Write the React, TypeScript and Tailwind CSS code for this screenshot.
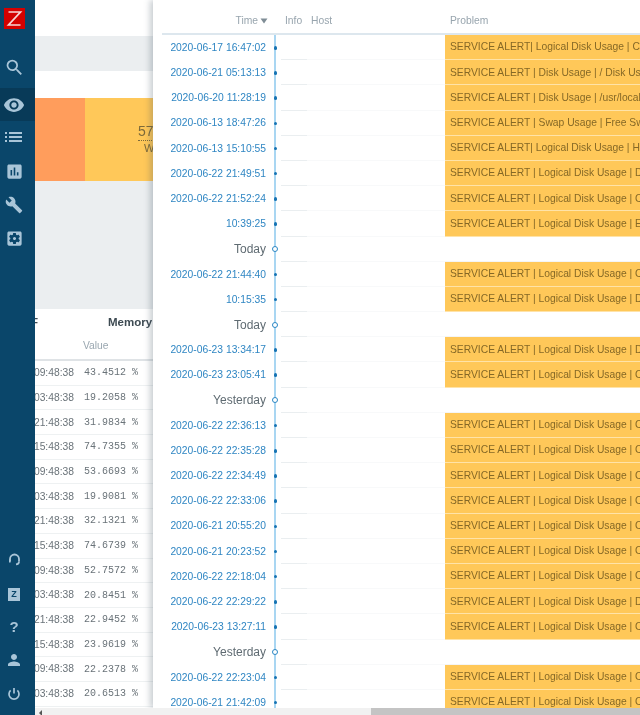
const events: Array<{ time?: string; day?: string; problem?: string }> = [
  { time: '2020-06-17 16:47:02', problem: 'SERVICE ALERT| Logical Disk Usage | C: Disk Usage' },
  { time: '2020-06-21 05:13:13', problem: 'SERVICE ALERT | Disk Usage | / Disk Usage' },
  { time: '2020-06-20 11:28:19', problem: 'SERVICE ALERT | Disk Usage | /usr/local' },
  { time: '2020-06-13 18:47:26', problem: 'SERVICE ALERT | Swap Usage | Free Swap' },
  { time: '2020-06-13 15:10:55', problem: 'SERVICE ALERT| Logical Disk Usage | H: Disk' },
  { time: '2020-06-22 21:49:51', problem: 'SERVICE ALERT | Logical Disk Usage | D: Disk' },
  { time: '2020-06-22 21:52:24', problem: 'SERVICE ALERT | Logical Disk Usage | C: Disk' },
  { time: '10:39:25', problem: 'SERVICE ALERT | Logical Disk Usage | E: Disk' },
  { day: 'Today' },
  { time: '2020-06-22 21:44:40', problem: 'SERVICE ALERT | Logical Disk Usage | C: Disk' },
  { time: '10:15:35', problem: 'SERVICE ALERT | Logical Disk Usage | D: Disk' },
  { day: 'Today' },
  { time: '2020-06-23 13:34:17', problem: 'SERVICE ALERT | Logical Disk Usage | D: Disk' },
  { time: '2020-06-23 23:05:41', problem: 'SERVICE ALERT | Logical Disk Usage | C: Disk' },
  { day: 'Yesterday' },
  { time: '2020-06-22 22:36:13', problem: 'SERVICE ALERT | Logical Disk Usage | C: Disk' },
  { time: '2020-06-22 22:35:28', problem: 'SERVICE ALERT | Logical Disk Usage | C: Disk' },
  { time: '2020-06-22 22:34:49', problem: 'SERVICE ALERT | Logical Disk Usage | C: Disk' },
  { time: '2020-06-22 22:33:06', problem: 'SERVICE ALERT | Logical Disk Usage | C: Disk' },
  { time: '2020-06-21 20:55:20', problem: 'SERVICE ALERT | Logical Disk Usage | C: Disk' },
  { time: '2020-06-21 20:23:52', problem: 'SERVICE ALERT | Logical Disk Usage | C: Disk' },
  { time: '2020-06-22 22:18:04', problem: 'SERVICE ALERT | Logical Disk Usage | C: Disk' },
  { time: '2020-06-22 22:29:22', problem: 'SERVICE ALERT | Logical Disk Usage | D: Disk' },
  { time: '2020-06-23 13:27:11', problem: 'SERVICE ALERT | Logical Disk Usage | C: Disk' },
  { day: 'Yesterday' },
  { time: '2020-06-22 22:23:04', problem: 'SERVICE ALERT | Logical Disk Usage | C: Disk' },
  { time: '2020-06-21 21:42:09', problem: 'SERVICE ALERT | Logical Disk Usage | C: Disk' },
]

const memory = [
  ['09:48:38', '43.4512 %'],
  ['03:48:38', '19.2058 %'],
  ['21:48:38', '31.9834 %'],
  ['15:48:38', '74.7355 %'],
  ['09:48:38', '53.6693 %'],
  ['03:48:38', '19.9081 %'],
  ['21:48:38', '32.1321 %'],
  ['15:48:38', '74.6739 %'],
  ['09:48:38', '52.7572 %'],
  ['03:48:38', '20.8451 %'],
  ['21:48:38', '22.9452 %'],
  ['15:48:38', '23.9619 %'],
  ['09:48:38', '22.2378 %'],
  ['03:48:38', '20.6513 %'],
]

const Icon = ({ d, size = 20 }: { d: string; size?: number }) => (
  <svg width={size} height={size} viewBox="0 0 24 24" fill="currentColor">
    <path d={d} />
  </svg>
)

const Sidebar = () => (
  <div className="z-20 flex h-full w-[35px] shrink-0 flex-col bg-[#0a466a] text-[#a9c5d8]">
    <div className="ml-[4px] mt-[8px] flex h-[21px] w-[21px] items-center justify-center bg-[#d40000]">
      <svg width="17" height="17" viewBox="0 0 17 17" fill="none" stroke="#f6d6d6" strokeWidth="1.7">
        <path d="M2.5 2h12L2.5 15h12" />
      </svg>
    </div>
    <div className="mt-[27px] flex h-[22px] w-[28px] items-center justify-center">
      <Icon size={21} d="M15.5 14h-.79l-.28-.27A6.471 6.471 0 0 0 16 9.5 6.5 6.5 0 1 0 9.5 16c1.61 0 3.09-.59 4.23-1.57l.27.28v.79l5 4.99L20.49 19l-4.99-5zm-6 0C7.01 14 5 11.99 5 9.5S7.01 5 9.5 5 14 7.01 14 9.5 11.99 14 9.5 14z" />
    </div>
    <div className="mt-[10px] flex h-[33px] w-full items-center bg-[#083a58]">
      <div className="flex w-[28px] justify-center">
        <Icon size={22} d="M12 4.5C7 4.5 2.73 7.61 1 12c1.73 4.39 6 7.5 11 7.5s9.27-3.11 11-7.5c-1.73-4.39-6-7.5-11-7.5zM12 17c-2.76 0-5-2.24-5-5s2.24-5 5-5 5 2.24 5 5-2.24 5-5 5zm0-8c-1.66 0-3 1.34-3 3s1.34 3 3 3 3-1.34 3-3-1.34-3-3-3z" />
      </div>
    </div>
    <div className="mt-[5px] flex h-[22px] w-[28px] items-center justify-center">
      <svg width="18" height="12" viewBox="0 0 18 12" fill="currentColor">
        <rect x="0" y="1" width="2" height="2" />
        <rect x="0" y="5" width="2" height="2" />
        <rect x="0" y="9" width="2" height="2" />
        <rect x="4" y="1" width="13" height="2" />
        <rect x="4" y="5" width="13" height="2" />
        <rect x="4" y="9" width="13" height="2" />
      </svg>
    </div>
    <div className="mt-[12px] flex h-[22px] w-[28px] items-center justify-center">
      <Icon size={19} d="M19 3H5c-1.1 0-2 .9-2 2v14c0 1.1.9 2 2 2h14c1.1 0 2-.9 2-2V5c0-1.1-.9-2-2-2zM9 17H7v-7h2v7zm4 0h-2V7h2v10zm4 0h-2v-4h2v4z" />
    </div>
    <div className="mt-[12px] flex h-[22px] w-[28px] items-center justify-center">
      <Icon size={18} d="M22.7 19l-9.1-9.1c.9-2.3.4-5-1.5-6.9-2-2-5-2.4-7.4-1.3L9 6 6 9 1.6 4.7C.4 7.1.9 10.1 2.9 12.1c1.9 1.9 4.6 2.4 6.9 1.5l9.1 9.1c.4.4 1 .4 1.4 0l2.3-2.3c.5-.4.5-1.1.1-1.4z" />
    </div>
    <div className="mt-[11px] flex h-[22px] w-[28px] items-center justify-center">
      <Icon size={19} d="M12 10c-1.1 0-2 .9-2 2s.9 2 2 2 2-.9 2-2-.9-2-2-2zm7-7H5c-1.11 0-2 .9-2 2v14c0 1.1.89 2 2 2h14c1.11 0 2-.9 2-2V5c0-1.1-.89-2-2-2zm-1.75 9c0 .23-.02.46-.05.68l1.48 1.16c.13.11.17.3.08.45l-1.4 2.42c-.09.15-.27.21-.43.15l-1.74-.7c-.36.28-.76.51-1.18.69l-.26 1.85c-.03.17-.18.3-.35.3h-2.8c-.17 0-.32-.13-.35-.29l-.26-1.85c-.43-.18-.82-.41-1.18-.69l-1.74.7c-.16.06-.34 0-.43-.15l-1.4-2.42c-.09-.15-.05-.34.08-.45l1.48-1.16c-.03-.23-.05-.46-.05-.69 0-.23.02-.46.05-.68l-1.48-1.16c-.13-.11-.17-.3-.08-.45l1.4-2.42c.09-.15.27-.21.43-.15l1.74.7c.36-.28.76-.51 1.18-.69l.26-1.85c.03-.17.18-.3.35-.3h2.8c.17 0 .32.13.35.29l.26 1.85c.43.18.82.41 1.18.69l1.74-.7c.16-.06.34 0 .43.15l1.4 2.42c.09.15.05.34-.08.45l-1.48 1.16c.03.23.05.46.05.69z" />
    </div>

    <div className="mt-auto flex h-[22px] w-[28px] items-center justify-center">
      <svg width="13" height="13" viewBox="0 0 13 13" fill="none" stroke="currentColor" strokeWidth="1.8">
        <path d="M2 8.5V6a4.5 4.5 0 0 1 9 0v2.5" />
        <path d="M11 8.5c0 1.5-1 2.7-3 2.9" />
        <rect x="1" y="6.5" width="1.6" height="3" fill="currentColor" stroke="none" />
      </svg>
    </div>
    <div className="mt-[13px] flex h-[22px] w-[28px] items-center justify-center">
      <div className="flex h-[13px] w-[12px] items-center justify-center bg-[#a9c5d8] text-[9px] font-bold leading-none text-[#0a466a]">Z</div>
    </div>
    <div className="mt-[10px] flex h-[22px] w-[28px] items-center justify-center text-[15px] font-bold leading-none">?</div>
    <div className="mt-[12px] flex h-[22px] w-[28px] items-center justify-center">
      <Icon size={18} d="M12 12c2.21 0 4-1.79 4-4s-1.79-4-4-4-4 1.79-4 4 1.79 4 4 4zm0 2c-2.67 0-8 1.34-8 4v2h16v-2c0-2.66-5.33-4-8-4z" />
    </div>
    <div className="mb-[10px] mt-[12px] flex h-[22px] w-[28px] items-center justify-center">
      <svg width="14" height="14" viewBox="0 0 14 14" fill="none" stroke="currentColor" strokeWidth="1.7">
        <path d="M7 1v5.5" />
        <path d="M3.6 3.4a5 5 0 1 0 6.8 0" />
      </svg>
    </div>
  </div>
)

const Dashboard = () => (
  <div className="flex min-h-0 flex-1 flex-col overflow-hidden bg-[#ebeef0]">
    <div className="h-[36px] shrink-0 bg-white" />
    <div className="h-[35px] shrink-0" />
    <div className="h-[27px] shrink-0 bg-white" />
    <div className="flex h-[83px] shrink-0">
      <div className="w-[50px] bg-[#ff9d5c]" />
      <div className="flex-1 bg-[#ffc859] pl-[53px] pt-[25px] text-[#7d6a3a]">
        <div className="w-[60px] border-b border-dotted border-[#7d6a3a] text-[14px] leading-[17px]">57</div>
        <div className="pl-[6px] text-[11px] leading-[14px]">W</div>
      </div>
    </div>
    <div className="h-[128px] shrink-0" />
    <div className="flex-1 bg-white">
      <div className="flex h-[27px] items-center whitespace-nowrap text-[11.5px] font-bold text-[#3e4b53]">
        <div className="flex w-[3px] justify-end overflow-hidden">F</div>
        <div className="ml-[70px]">Memory</div>
      </div>
      <div className="flex h-[25px] items-center border-b-2 border-[#dfe3e6] pb-[3px] pl-[48px] text-[10.3px] text-[#9aa7b0]">Value</div>
      {memory.map(([time, value], i) => (
        <div key={i} className="flex h-[24.7px] items-center border-b border-[#eef1f2] whitespace-nowrap">
          <div className="flex w-[39px] justify-end text-[10.3px] text-[#6a7379]">{time}</div>
          <div className="ml-[10px] font-['Liberation_Mono',monospace] text-[10px] text-[#6a7379]">{value}</div>
        </div>
      ))}
    </div>
  </div>
)

const EventRow = ({ time, day, problem }: { time?: string; day?: string; problem?: string }) => (
  <div className="flex h-[25.2px] items-stretch whitespace-nowrap">
    <div className={day ? 'flex w-[113px] items-center justify-end text-[12px] text-[#5f6b72]' : 'flex w-[113px] items-center justify-end text-[10.3px] text-[#2f86c3]'}>
      {day ?? time}
    </div>
    <div className="relative w-[15px]">
      <div className="absolute bottom-0 left-[8px] top-0 w-[2px] bg-[#a9d6f2]" />
      {day ? (
        <div className="absolute left-[6px] top-[9.5px] h-[6px] w-[6px] rounded-full border-[1.5px] border-[#2a87c4] bg-white" />
      ) : (
        <div className="absolute left-[7.5px] top-[11px] h-[3.5px] w-[3.5px] rounded-full bg-[#1673b3]" />
      )}
    </div>
    <div className="w-[26px] border-b border-[#eaeef0]" />
    <div className="w-[138px] border-b border-[#f8f9fa]" />
    {problem ? (
      <div className="flex flex-1 items-center overflow-hidden border-b border-[#ffe3a8] bg-[#ffc859] pl-[5px] text-[10.3px] text-[#856826]">
        {problem}
      </div>
    ) : (
      <div className="flex-1 border-b border-[#f4f5f6]" />
    )}
  </div>
)

export default function App() {
  return (
    <div className="relative flex h-[715px] w-[640px] overflow-hidden bg-white font-['Liberation_Sans',sans-serif] blur-[0.45px]">
      <Sidebar />
      <div className="flex min-w-0 flex-1 flex-col">
        <Dashboard />
        <div className="z-20 flex h-[7px] shrink-0 bg-[#f1f1f1]">
          <div className="ml-[4px] mt-[2px] h-0 w-0 border-y-[3px] border-r-[3px] border-y-transparent border-r-[#555]" />
          <div className="ml-auto w-[269px] bg-[#c4c4c4]" />
        </div>
      </div>

      <div className="absolute bottom-[7px] left-[153px] right-0 top-0 z-10 overflow-hidden bg-white shadow-[-3px_0_6px_rgba(60,80,95,0.28)]">
        <div className="ml-[9px] flex h-[35px] items-center border-b-2 border-[#dde7ee] pt-[9px] text-[10.3px] text-[#98a5ae]">
          <div className="flex w-[106px] items-center justify-end gap-[2px]">
            Time
            <svg width="8" height="6" viewBox="0 0 8 6" fill="#7f8d96"><path d="M0.5 0.5h7L4 5.5z" /></svg>
          </div>
          <div className="ml-[17px] w-[26px]">Info</div>
          <div className="w-[139px]">Host</div>
          <div>Problem</div>
        </div>
        {events.map((row, i) => (
          <EventRow key={i} {...row} />
        ))}
      </div>
    </div>
  )
}
